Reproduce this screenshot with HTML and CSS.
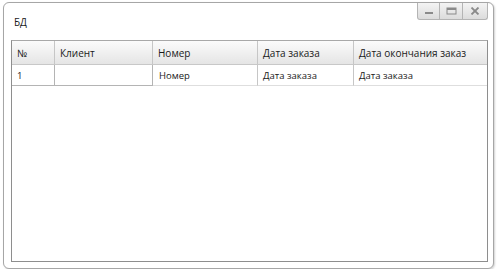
FILE: index.html
```html
<!DOCTYPE html>
<html>
<head>
<meta charset="utf-8">
<link rel="stylesheet" href="styles.css">
</head>
<body>
<div class="window">
  <div class="titlebar">
    <div class="title">БД</div>
    <div class="controls">
      <div class="btn"><svg width="10" height="8" viewBox="0 0 10 8"><rect x="1" y="5" width="8" height="2" fill="#8a8a8a"/></svg></div>
      <div class="btn"><svg width="11" height="8" viewBox="0 0 11 8"><rect x="1" y="1" width="9" height="6" fill="none" stroke="#8a8a8a" stroke-width="1"/><rect x="1" y="1" width="9" height="2" fill="#8a8a8a"/></svg></div>
      <div class="btn btn-close"><svg width="10" height="8" viewBox="0 0 10 8"><path d="M1.5 0.5 L8.5 7.5 M8.5 0.5 L1.5 7.5" stroke="#8a8a8a" stroke-width="1.8"/></svg></div>
    </div>
  </div>
  <div class="grid">
    <div class="row head">
      <div class="cell c1">№</div>
      <div class="cell c2">Клиент</div>
      <div class="cell c3">Номер</div>
      <div class="cell c4">Дата заказа</div>
      <div class="cell c5">Дата окончания заказ</div>
    </div>
    <div class="row data">
      <div class="cell c1 dark">1</div>
      <div class="cell c2 dark"></div>
      <div class="cell c3">Номер</div>
      <div class="cell c4">Дата заказа</div>
      <div class="cell c5">Дата заказа</div>
    </div>
  </div>
</div>
</body>
</html>
```
FILE: styles.css
```css
html, body {
  margin: 0;
  padding: 0;
  background: #ffffff;
}
body {
  font-family: "Open Sans", "Noto Sans", sans-serif;
  font-size: 10px;
  color: #1a1a1a;
  padding: 2px 0 0 3px;
}
.window {
  box-sizing: border-box;
  width: 491px;
  height: 267px;
  border: 1px solid #a6a6a6;
  border-radius: 6px;
  box-shadow: 1px 1px 2px rgba(0,0,0,0.18);
  background: #fff;
  display: flex;
  flex-direction: column;
  padding: 0 5px 6px 7px;
}
.titlebar {
  display: flex;
  align-items: flex-start;
  height: 37px;
}
.title {
  padding: 12px 0 0 3px;
  font-size: 10px;
}
.controls {
  margin-left: auto;
  display: flex;
}
.btn {
  box-sizing: border-box;
  width: 23px;
  height: 17px;
  border: 1px solid #b4b4b4;
  border-top: none;
  border-left: none;
  background: linear-gradient(#f4f4f4, #dcdcdc);
  display: flex;
  align-items: center;
  justify-content: center;
}
.controls .btn:first-child {
  border-left: 1px solid #b4b4b4;
  border-bottom-left-radius: 3px;
}
.btn-close {
  width: 25px;
  border-bottom-right-radius: 3px;
}
.grid {
  flex: 1;
  border: 1px solid #8e8e8e;
  border-top-color: #a8a8a8;
  display: flex;
  flex-direction: column;
}
.row {
  display: grid;
  grid-template-columns: 43px 98px 105px 96px 1fr;
}
.cell {
  box-sizing: border-box;
  padding-left: 5px;
  display: flex;
  align-items: center;
  white-space: nowrap;
  overflow: hidden;
  border-right: 1px solid #c6c6c6;
}
.head .cell {
  height: 24px;
  background: linear-gradient(#fbfbfb, #e5e5e5);
  border-bottom: 1px solid #c8c8c8;
  padding-top: 1px;
}
.head .c5, .data .c5 {
  border-right: none;
}
.data .cell {
  height: 21px;
  border-bottom: 1px solid #dedede;
  font-size: 9.5px;
}
.data .cell.dark {
  border-bottom-color: #b4b4b4;
  border-right-color: #b4b4b4;
}
.data .c3 {
  padding-left: 6px;
}
```
